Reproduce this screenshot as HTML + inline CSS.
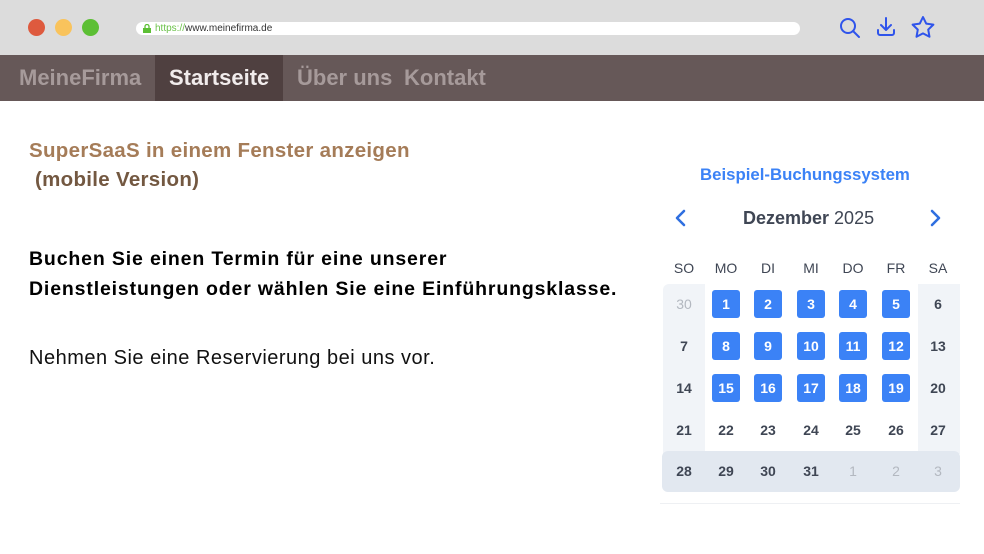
<!DOCTYPE html>
<html><head><meta charset="utf-8"><style>
*{margin:0;padding:0;box-sizing:border-box}
body{width:984px;height:554px;overflow:hidden;background:#fff;font-family:"Liberation Sans",sans-serif;position:relative}
.a{position:absolute;white-space:nowrap}
.top{position:absolute;left:0;top:0;width:984px;height:55px;background:#dcdcdc}
.dot{position:absolute;top:19px;width:17px;height:17px;border-radius:50%}
.url{position:absolute;left:136px;top:22px;width:664px;height:13px;background:#fff;border-radius:7px;font-size:10px;line-height:13px;padding-left:19px;color:#333}
.nav{position:absolute;left:0;top:55px;width:984px;height:46px;background:#665858}
.nav span{position:absolute;top:10px;font-size:22px;font-weight:bold;color:#a69a9a}
.d{position:absolute;width:42px;height:28px;line-height:28px;text-align:center;font-size:14px;font-weight:bold;color:#3f4654}
.b{position:absolute;width:28px;height:28px;line-height:28px;text-align:center;background:#3b82f6;border-radius:3px;color:#fff;font-size:14px;font-weight:bold}
</style></head><body>
<div class="top">
<div class="dot" style="left:28px;background:#de5a3e"></div>
<div class="dot" style="left:55px;background:#f9c35c"></div>
<div class="dot" style="left:82px;background:#5cbf34"></div>
<div class="url"><svg style="position:absolute;left:7px;top:2px" width="8" height="9" viewBox="0 0 8 9"><rect x="0" y="4" width="8" height="5" fill="#5cbf34"/><path d="M2 4V2.5a2 2 0 0 1 4 0V4" stroke="#5cbf34" fill="none" stroke-width="1.3"/></svg><span style="color:#6cc24a">https://</span>www.meinefirma.de</div>
<svg class="a" style="left:838px;top:16px" width="24" height="24" viewBox="0 0 24 24" fill="none" stroke="#2f54eb" stroke-width="2" stroke-linecap="round"><circle cx="10" cy="10" r="7"/><path d="M15 15l6 6"/></svg>
<svg class="a" style="left:874px;top:15px" width="24" height="24" viewBox="0 0 24 24" fill="none" stroke="#2f54eb" stroke-width="2" stroke-linecap="round" stroke-linejoin="round"><path d="M12 3v12M7 10l5 5 5-5M4 15v3a2 2 0 0 0 2 2h12a2 2 0 0 0 2-2v-3"/></svg>
<svg class="a" style="left:910px;top:15px" width="26" height="24" viewBox="0 0 26 24" fill="none" stroke="#2f54eb" stroke-width="2" stroke-linejoin="round"><path d="M13 2l3.2 6.6 7.2 1-5.2 5 1.3 7.2L13 18.4l-6.5 3.4 1.3-7.2-5.2-5 7.2-1z"/></svg>
</div>
<div class="nav">
<div style="position:absolute;left:155px;top:0;width:128px;height:46px;background:#4f4040"></div>
<span style="left:19px">MeineFirma</span>
<span style="left:169px;color:#f1ecec">Startseite</span>
<span style="left:297px">Über uns</span>
<span style="left:404px">Kontakt</span>
</div>
<div class="a" style="left:29px;top:139px;font-size:20.5px;font-weight:bold;color:#a57c58;letter-spacing:0.3px">SuperSaaS in einem Fenster anzeigen</div>
<div class="a" style="left:29px;top:168px;font-size:20.5px;font-weight:bold;color:#735841;letter-spacing:0.3px">&nbsp;(mobile Version)</div>
<div class="a" style="left:29px;top:244px;font-size:19.5px;font-weight:bold;color:#000;line-height:30px;letter-spacing:0.85px">Buchen Sie einen Termin für eine unserer<br>Dienstleistungen oder wählen Sie eine Einführungsklasse.</div>
<div class="a" style="left:29px;top:347px;font-size:20px;color:#111;letter-spacing:0.5px">Nehmen Sie eine Reservierung bei uns vor.</div>

<div class="a" style="left:700px;top:165px;font-size:16.8px;font-weight:bold;color:#3b82f6">Beispiel-Buchungssystem</div>
<svg class="a" style="left:674px;top:209px" width="14" height="18" viewBox="0 0 14 18" fill="none" stroke="#2f6fe0" stroke-width="2.6" stroke-linecap="round" stroke-linejoin="round"><path d="M10 2L3 9l7 7"/></svg>
<svg class="a" style="left:928px;top:209px" width="14" height="18" viewBox="0 0 14 18" fill="none" stroke="#2f6fe0" stroke-width="2.6" stroke-linecap="round" stroke-linejoin="round"><path d="M4 2l7 7-7 7"/></svg>
<div class="a" style="left:743px;top:208px;font-size:18px;color:#3f4654"><b>Dezember</b> 2025</div>

<div style="position:absolute;left:663px;top:284px;width:42px;height:170px;background:#f1f4f8;border-radius:6px 0 0 0"></div>
<div style="position:absolute;left:918px;top:284px;width:42px;height:170px;background:#f1f4f8"></div>
<div style="position:absolute;left:662px;top:451px;width:298px;height:41px;background:#e2e8f0;border-radius:6px"></div>
<div style="position:absolute;left:660px;top:503px;width:300px;height:1px;background:#eef0f3"></div>

<div id="c"></div>
<script>
var xs=[684,726,768,811,853,896,938];
var h=["SO","MO","DI","MI","DO","FR","SA"];
var o="";
h.forEach(function(t,i){o+='<div class="d" style="left:'+(xs[i]-21)+'px;top:254px;font-weight:normal;color:#3f4654">'+t+'</div>';});
var rows=[[30,1,2,3,4,5,6],[7,8,9,10,11,12,13],[14,15,16,17,18,19,20],[21,22,23,24,25,26,27],[28,29,30,31,1,2,3]];
var ys=[304,346,388,430,471];
rows.forEach(function(r,ri){r.forEach(function(n,ci){
 var y=ys[ri];
 if(ri<3&&ci>0&&ci<6){o+='<div class="b" style="left:'+(xs[ci]-14)+'px;top:'+(y-14)+'px">'+n+'</div>';}
 else{var grey=(ri==0&&ci==0)||(ri==4&&ci>3);
 o+='<div class="d" style="left:'+(xs[ci]-21)+'px;top:'+(y-14)+'px;'+(grey?'color:#b3b8c0;font-weight:normal':'')+'">'+n+'</div>';}
});});
document.getElementById("c").innerHTML=o;
</script>
</body></html>
